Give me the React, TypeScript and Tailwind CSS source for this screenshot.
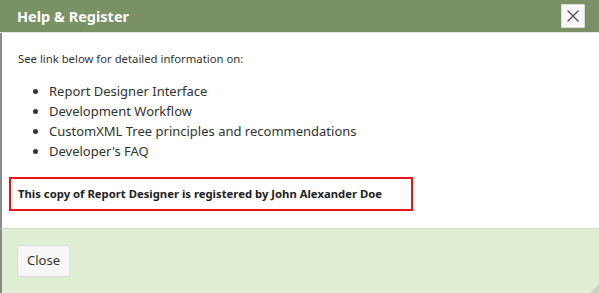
const topics = [
  'Report Designer Interface',
  'Development Workflow',
  'CustomXML Tree principles and recommendations',
  "Developer's FAQ",
]

export default function App() {
  return (
    <div
      className="w-[599px] h-[293px] flex flex-col overflow-hidden text-[#333]"
      style={{ fontFamily: '"Noto Sans", "Open Sans", sans-serif' }}
    >
      <div className="h-[33px] shrink-0 flex items-center justify-between bg-[#7a9166] border-b border-[#e5e5e5] pl-[17px] pr-[14px]">
        <h2 className="text-[14.5px] font-bold text-white leading-none">Help &amp; Register</h2>
        <button className="w-[24px] h-[24px] flex items-center justify-center bg-[#f8f8f8] border border-[#dcdcdc] rounded-[1px]">
          <svg width="14" height="14" viewBox="0 0 14 14" fill="none" stroke="#444" strokeWidth="1.1">
            <path d="M1.5 1.5 L12.5 12.5 M12.5 1.5 L1.5 12.5" />
          </svg>
        </button>
      </div>

      <div className="flex-1 bg-white border-l-2 border-[#8a8a8a] pt-[18px] pl-[7px] pr-[10px]">
        <p className="text-[11.3px] pl-[9px] leading-[16px]">See link below for detailed information on:</p>
        <ul className="mt-[14px] pl-[40px] list-disc text-[13px] leading-[20px] text-[#333]">
          {topics.map((t) => (
            <li key={t}>{t}</li>
          ))}
        </ul>
        <div className="mt-[16px] w-[404px] h-[34px] flex items-center border-2 border-[#e8141c] px-[7px]">
          <span className="text-[11.3px] font-bold text-[#222]">
            This copy of Report Designer is registered by John Alexander Doe
          </span>
        </div>
      </div>

      <div className="h-[65px] shrink-0 relative bg-[#e0efd4] border-l-2 border-l-[#8a8a8a] border-t border-t-[#cfdcc4] pt-[16px] pl-[15px]">
        <button className="w-[53px] h-[32px] bg-[#f7f7f7] border border-[#dcdcdc] rounded-[2px] text-[13px] text-[#333]">
          Close
        </button>
        <div className="absolute right-0 bottom-0 w-0 h-0 border-l-[9px] border-l-transparent border-b-[9px] border-b-[#c8d4be]" />
      </div>
    </div>
  )
}
